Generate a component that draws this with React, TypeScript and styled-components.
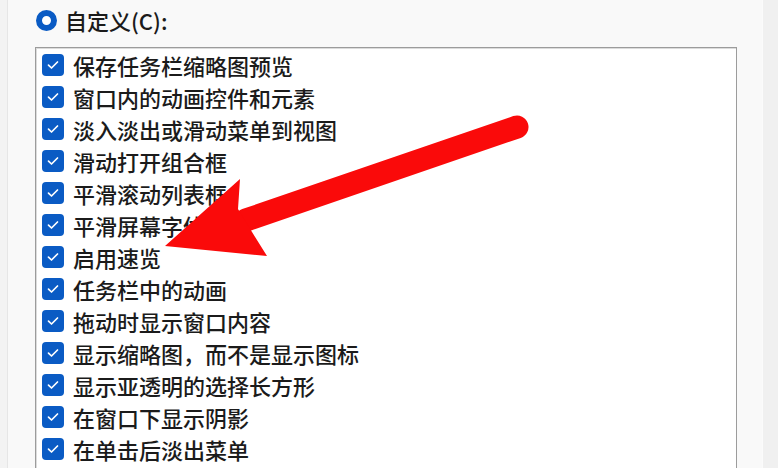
import React from 'react';
import styled, { createGlobalStyle } from 'styled-components';

const GlobalStyle = createGlobalStyle`
  html, body {
    margin: 0;
    padding: 0;
    background: #f9f9f9;
    overflow: hidden;
  }
  body {
    font-family: "Noto Sans CJK SC", "Noto Sans", sans-serif;
    color: #1b1b1b;
  }
`;

const Page = styled.div`
  position: relative;
  display: flex;
  width: 778px;
  height: 468px;
  overflow: hidden;
`;

const EdgeStrip = styled.div`
  width: 7px;
  background: #f3f3f3;
  border-right: 1px solid #e6e6e6;
`;

const Main = styled.div`
  flex: 1;
  display: flex;
  flex-direction: column;
  padding-left: 27px;
`;

const ScrollStrip = styled.div`
  width: 15px;
  background: #f0f0f0;
  border-left: 1px solid #fbfbfb;
`;

const RadioRow = styled.label`
  display: flex;
  align-items: center;
  gap: 8px;
  height: 40px;
  padding-left: 1px;
  font-size: 22px;
  font-weight: 500;
`;

const Radio = styled.span`
  box-sizing: border-box;
  width: 21px;
  height: 21px;
  border-radius: 50%;
  border: 6.5px solid #0a5bc4;
  background: #ffffff;
`;

const ListBox = styled.div`
  margin-top: 7px;
  width: 702px;
  flex: 1;
  box-sizing: border-box;
  background: #ffffff;
  border: 1px solid #9c9c9c;
  border-bottom: none;
  box-shadow: inset 1px 1px 0 #dcdcdc;
  padding: 1px 0 0 6px;
`;

const Row = styled.div`
  display: flex;
  align-items: center;
  gap: 9px;
  height: 32px;
  font-size: 22px;
  font-weight: 500;
  white-space: nowrap;
`;

const Check = styled.span`
  display: flex;
  align-items: center;
  justify-content: center;
  width: 22px;
  height: 22px;
  border-radius: 4px;
  background: #0a5bc4;
  flex-shrink: 0;
`;

const ArrowLayer = styled.svg`
  position: absolute;
  left: 0;
  top: 0;
  pointer-events: none;
`;

const items = [
  '保存任务栏缩略图预览',
  '窗口内的动画控件和元素',
  '淡入淡出或滑动菜单到视图',
  '滑动打开组合框',
  '平滑滚动列表框',
  '平滑屏幕字体边缘',
  '启用速览',
  '任务栏中的动画',
  '拖动时显示窗口内容',
  '显示缩略图，而不是显示图标',
  '显示亚透明的选择长方形',
  '在窗口下显示阴影',
  '在单击后淡出菜单',
];

const Tick = () => (
  <svg width="12" height="10" viewBox="0 0 12 10">
    <path d="M1.5 5.2 L4.5 8 L10.5 2" fill="none" stroke="#ffffff" strokeWidth="1.7" strokeLinecap="round" strokeLinejoin="round" />
  </svg>
);

const App: React.FC = () => {
  return (
    <>
      <GlobalStyle />
      <Page>
        <EdgeStrip />
        <Main>
          <RadioRow>
            <Radio />
            自定义(C):
          </RadioRow>
          <ListBox>
            {items.map((item, index) => (
              <Row key={index}>
                <Check>
                  <Tick />
                </Check>
                {item}
              </Row>
            ))}
          </ListBox>
        </Main>
        <ScrollStrip />
        <ArrowLayer width="778" height="468" viewBox="0 0 778 468">
          <line x1="517" y1="127" x2="246" y2="220" stroke="#fa0a0a" strokeWidth="23" strokeLinecap="round" />
          <polygon points="165,246 240,179 238,209 252,232 267,256" fill="#fa0a0a" />
        </ArrowLayer>
      </Page>
    </>
  );
};

export default App;
